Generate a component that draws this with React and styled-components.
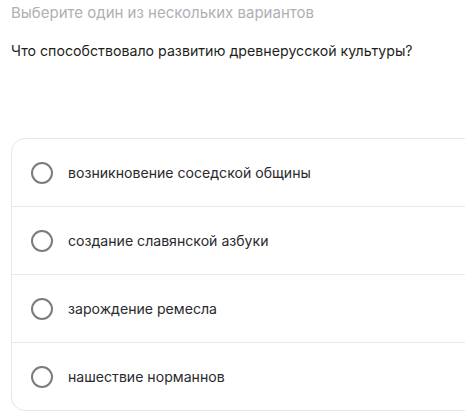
import React from "react";
import styled, { createGlobalStyle } from "styled-components";

const Global = createGlobalStyle`
  html, body { margin: 0; padding: 0; background: #ffffff; }
  body { font-family: Inter, "Noto Sans", Arial, sans-serif; overflow: hidden; }
`;

const Page = styled.div`
  width: 465px;
  height: 415px;
  padding: 3px 0 0 11px;
  box-sizing: border-box;
  overflow: hidden;
`;

const Hint = styled.div`
  font-size: 15px;
  line-height: 20px;
  color: #b0b0b4;
`;

const Question = styled.div`
  margin-top: 18px;
  font-size: 14.2px;
  line-height: 20px;
  color: #1f1f22;
`;

const Card = styled.div`
  margin-top: 77px;
  width: 480px;
  border: 1px solid #e6e6e8;
  border-radius: 14px;
  background: #fff;
`;

const Row = styled.label`
  display: flex;
  align-items: center;
  gap: 15px;
  height: 67px;
  padding-left: 19px;
  border-top: ${(p) => (p.$first ? "none" : "1px solid #e9e9eb")};
  font-size: 14.1px;
  color: #2a2a2e;
  cursor: pointer;
`;

const Radio = styled.span`
  width: 18px;
  height: 18px;
  border: 2px solid #7b7b80;
  border-radius: 50%;
  flex-shrink: 0;
`;

const options = [
  "возникновение соседской общины",
  "создание славянской азбуки",
  "зарождение ремесла",
  "нашествие норманнов",
];

export default function App() {
  return (
    <Page>
      <Global />
      <Hint>Выберите один из нескольких вариантов</Hint>
      <Question>Что способствовало развитию древнерусской культуры?</Question>
      <Card>
        {options.map((o, i) => (
          <Row key={o} $first={i === 0}>
            <Radio />
            <span>{o}</span>
          </Row>
        ))}
      </Card>
    </Page>
  );
}
